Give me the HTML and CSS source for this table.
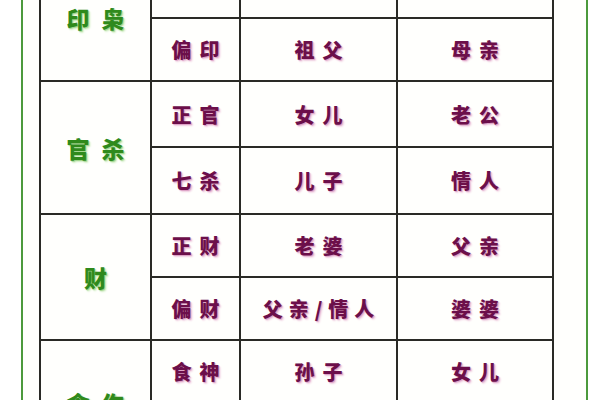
FILE: index.html
```html
<!DOCTYPE html>
<html lang="zh">
<head>
<meta charset="utf-8">
<link rel="stylesheet" href="styles.css">
</head>
<body>
<div class="frame">
  <table class="gods">
    <colgroup><col class="c1"><col class="c2"><col class="c3"><col class="c4"></colgroup>
    <tbody>
      <tr class="r63 first"><td rowspan="2" class="grp">印枭</td><td>正印</td><td>母亲</td><td>母亲</td></tr>
      <tr class="r63"><td>偏印</td><td>祖父</td><td>母亲</td></tr>
      <tr class="r66"><td rowspan="2" class="grp">官杀</td><td>正官</td><td>女儿</td><td>老公</td></tr>
      <tr class="r67"><td>七杀</td><td>儿子</td><td>情人</td></tr>
      <tr class="r63"><td rowspan="2" class="grp">财</td><td>正财</td><td>老婆</td><td>父亲</td></tr>
      <tr class="r63"><td>偏财</td><td class="tight">父亲/情人</td><td>婆婆</td></tr>
      <tr class="r63"><td rowspan="2" class="grp">食伤</td><td>食神</td><td>孙子</td><td>女儿</td></tr>
      <tr class="r63"><td>伤官</td><td>外婆</td><td>儿子</td></tr>
    </tbody>
  </table>
</div>
</body>
</html>
```

FILE: styles.css
```css
html, body {
  margin: 0;
  padding: 0;
  background: #ffffff;
  width: 600px;
  height: 400px;
  overflow: hidden;
}

.frame {
  margin-left: 21px;
  width: 547px;
  height: 400px;
  border-left: 2px solid #4c9a3c;
  border-right: 2px solid #4c9a3c;
  padding-left: 16px;
  overflow: hidden;
  background: #fffffd;
}

.gods {
  border-collapse: collapse;
  table-layout: fixed;
  width: 513px;
  margin-top: -46px;
  font-family: "Noto Sans CJK SC", "Noto Sans", sans-serif;
  font-weight: 900;
}

.c1 { width: 111px; }
.c2 { width: 89px; }
.c3 { width: 157px; }
.c4 { width: 156px; }

.gods td {
  border: 2px solid #2a2a26;
  text-align: center;
  vertical-align: middle;
  padding: 0;
  font-size: 20px;
  letter-spacing: 8px;
  text-indent: 8px;
  color: #6c0f4a;
  text-shadow: 1px 1px 1px #dc9fc4, 2px 2px 2px #f1d3e4;
}

.gods tr.first td {
  padding-bottom: 8px;
}

.gods tr.first td.grp {
  padding-bottom: 0;
}

.gods td.tight {
  letter-spacing: 6px;
  text-indent: 6px;
}

.gods td.grp {
  font-size: 23px;
  letter-spacing: 12px;
  text-indent: 12px;
  color: #2f8a1c;
  text-shadow: 1px 1px 1px #9fd48a, 2px 2px 2px #d4efc8;
}

.r63 { height: 63px; }
.r66 { height: 66px; }
.r67 { height: 67px; }
```
